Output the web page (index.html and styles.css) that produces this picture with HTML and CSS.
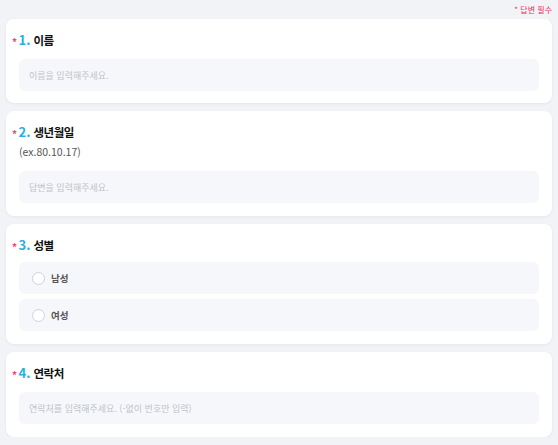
FILE: index.html
```html
<!DOCTYPE html>
<html lang="ko">
<head>
<meta charset="utf-8">
<link rel="stylesheet" href="styles.css">
</head>
<body>
<div class="page">
  <div class="required-note">* 답변 필수</div>

  <section class="card">
    <h2 class="q-title"><span class="star">*</span><span class="num">1.</span>이름</h2>
    <div class="field">이름을 입력해주세요.</div>
  </section>

  <section class="card">
    <h2 class="q-title"><span class="star">*</span><span class="num">2.</span>생년월일</h2>
    <p class="q-desc">(ex.80.10.17)</p>
    <div class="field">답변을 입력해주세요.</div>
  </section>

  <section class="card">
    <h2 class="q-title"><span class="star">*</span><span class="num">3.</span>성별</h2>
    <div class="options">
      <div class="option"><span class="radio"></span><span class="opt-label">남성</span></div>
      <div class="option"><span class="radio"></span><span class="opt-label">여성</span></div>
    </div>
  </section>

  <section class="card">
    <h2 class="q-title"><span class="star">*</span><span class="num">4.</span>연락처</h2>
    <div class="field">연락처를 입력해주세요. (-없이 번호만 입력)</div>
  </section>
</div>
</body>
</html>
```

FILE: styles.css
```css
* { box-sizing: border-box; }
html, body {
  margin: 0;
  padding: 0;
  background: #f2f3f7;
  font-family: "Noto Sans CJK KR", "Noto Sans", sans-serif;
}
.page {
  padding: 4px 6px 0 6px;
  display: flex;
  flex-direction: column;
  gap: 8px;
}
.required-note {
  align-self: flex-end;
  color: #e8305a;
  font-size: 8px;
  line-height: 12px;
  margin-right: 0;
  margin-bottom: -5px;
}
.card {
  background: #ffffff;
  border-radius: 8px;
  padding: 12px 13px 13px 13px;
  box-shadow: 0 1px 3px rgba(20, 30, 60, 0.06);
}
.required-note + .card { padding-bottom: 12px; }
.q-title {
  margin: 0 0 0 -7px;
  height: 18px;
  display: flex;
  align-items: center;
  font-size: 11.5px;
  letter-spacing: -0.5px;
  line-height: 18px;
  font-weight: 700;
  color: #111;
}
.star {
  color: #e8486a;
  font-size: 10px;
  line-height: 10px;
  font-weight: 700;
  margin-right: 2px;
  margin-top: 3px;
}
.num {
  color: #2bb0e0;
  font-size: 13px;
  letter-spacing: 0;
  margin-right: 3px;
}
.q-desc {
  margin: 4px 0 0 0;
  font-size: 10.5px;
  line-height: 14px;
  color: #555;
}
.field {
  margin-top: 10px;
  height: 32px;
  border-radius: 6px;
  background: #f6f7fa;
  padding: 0 10px;
  display: flex;
  align-items: center;
  font-size: 9px;
  color: #c0c3ca;
}
.q-desc + .field { margin-top: 12px; }
.options {
  margin-top: 8px;
  display: flex;
  flex-direction: column;
  gap: 5px;
}
.option {
  height: 32px;
  border-radius: 6px;
  background: #f6f7fa;
  padding: 0 13px;
  display: flex;
  align-items: center;
  gap: 6px;
}
.radio {
  width: 13px;
  height: 13px;
  border-radius: 50%;
  border: 1px solid #cfd2d8;
  background: #fff;
}
.opt-label {
  font-size: 9.5px;
  font-weight: 700;
  color: #555;
}
```
